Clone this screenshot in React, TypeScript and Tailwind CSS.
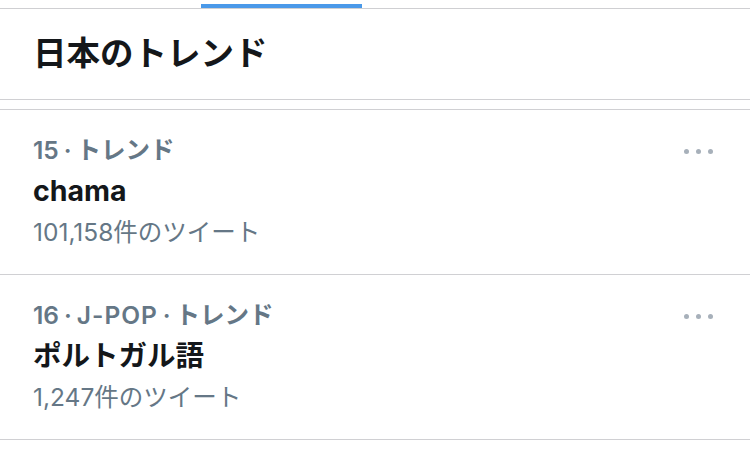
const trends = [
    { rank: 15, meta: ['トレンド'], name: 'chama', count: '101,158件のツイート' },
    { rank: 16, meta: ['J-POP', 'トレンド'], name: 'ポルトガル語', count: '1,247件のツイート' },
]

const MoreDots = () => (
    <div className="flex items-center gap-[7px] pt-[1px]">
        <span className="block w-[5px] h-[5px] rounded-full bg-[#a7b0ba]"></span>
        <span className="block w-[5px] h-[5px] rounded-full bg-[#a7b0ba]"></span>
        <span className="block w-[5px] h-[5px] rounded-full bg-[#a7b0ba]"></span>
    </div>
)

const App = () => {
    return (
        <div
            className="w-[750px] h-[454px] bg-white overflow-hidden"
            style={{ fontFamily: 'Inter, "Noto Sans CJK JP", sans-serif' }}
        >
            {/* tab bar underline */}
            <div className="h-[9px] border-b border-[#cfcfd2] pl-[201px] flex items-end">
                <div className="w-[161px] h-[4px] bg-[#4a99e9]"></div>
            </div>

            <div className="h-[90px] flex items-center px-[33px]">
                <h1 className="text-[33.5px] font-bold text-[#14171a] leading-none">日本のトレンド</h1>
            </div>

            <div className="h-[11px] border-t border-b border-[#d0d0d3]"></div>

            {trends.map((t) => (
                <div key={t.name} className="flex justify-between pl-[33px] pr-[37px] pt-[20px] pb-[21px] border-b border-[#d0d0d3]">
                    <div className="flex flex-col">
                        <div className="h-[41px] flex items-center text-[24.5px] font-semibold text-[#657786]">
                            <span>{t.rank}</span>
                            {t.meta.map((m) => (
                                <span key={m} className="flex items-center">
                                    <span className="px-[5px]">·</span>
                                    <span className={m === 'J-POP' ? 'tracking-[0.04em]' : ''}>{m}</span>
                                </span>
                            ))}
                        </div>
                        <div className="h-[41px] flex items-center text-[28.5px] font-bold text-[#14171a]">{t.name}</div>
                        <div className="h-[41px] flex items-center text-[24.5px] text-[#657786]">{t.count}</div>
                    </div>
                    <div className="h-[41px] flex items-center">
                        <MoreDots />
                    </div>
                </div>
            ))}
        </div>
    )
}

export default App
